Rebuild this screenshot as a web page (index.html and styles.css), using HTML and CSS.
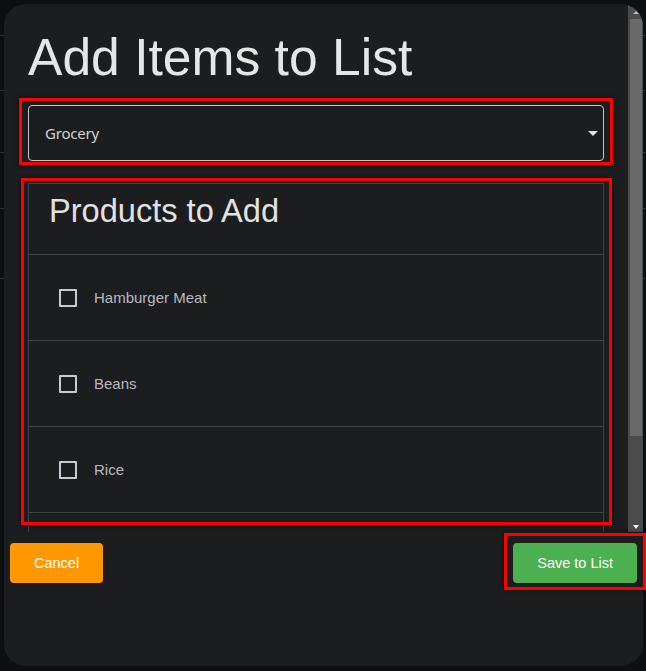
FILE: index.html
```html
<!DOCTYPE html>
<html lang="en">
<head>
<meta charset="utf-8">
<title>Add Items to List</title>
<link rel="stylesheet" href="styles.css">
</head>
<body>
<div class="page">
  <div class="page-row r1"></div>
  <div class="page-row r2"></div>
  <div class="page-row r3"></div>
  <div class="page-row r4"></div>
  <div class="page-row r5"></div>
</div>

<div class="modal">
  <div class="top">
    <div class="scroll">
      <h1 class="title">Add Items to List</h1>

      <div class="select-field">
        <span class="select-value">Grocery</span>
        <span class="select-arrow"></span>
        <span class="mark mark-select"></span>
      </div>

      <div class="list-wrap">
        <div class="list">
          <div class="list-header">Products to Add</div>
          <label class="list-row"><span class="checkbox"></span><span class="row-label">Hamburger Meat</span></label>
          <label class="list-row"><span class="checkbox"></span><span class="row-label">Beans</span></label>
          <label class="list-row"><span class="checkbox"></span><span class="row-label">Rice</span></label>
          <div class="list-row list-row-more"></div>
        </div>
        <span class="mark mark-list"></span>
      </div>
    </div>

    <div class="scrollbar">
      <div class="sb-btn"><span class="sb-arrow-up"></span></div>
      <div class="sb-track"><div class="sb-thumb"></div></div>
      <div class="sb-btn"><span class="sb-arrow-down"></span></div>
    </div>
  </div>

  <div class="footer">
    <button class="btn btn-cancel">Cancel</button>
    <div class="save-wrap">
      <button class="btn btn-save">Save to List</button>
      <span class="mark mark-save"></span>
    </div>
  </div>
</div>
</body>
</html>
```

FILE: styles.css
```css
html, body {
  margin: 0;
  padding: 0;
  background: #0e0f11;
  height: 100%;
  overflow: hidden;
  font-family: "Liberation Sans", Arial, sans-serif;
}

.page {
  display: flex;
  flex-direction: column;
}

.page-row {
  border-bottom: 1px solid #2a2c30;
}
.r1 { height: 35px; }
.r2 { height: 54px; }
.r3 { height: 61px; }
.r4 { height: 55px; }
.r5 { height: 69px; }

.modal {
  position: fixed;
  left: 4px;
  top: 4px;
  width: 639px;
  height: 662px;
  background: #1c1d1f;
  border-radius: 22px;
  display: flex;
  flex-direction: column;
}

.top {
  display: flex;
  height: 528px;
  flex: none;
  border-radius: 22px 22px 0 0;
  overflow: hidden;
}

.scroll {
  flex: 1;
  min-width: 0;
  box-sizing: border-box;
  overflow: hidden;
  padding: 23px 24px 0 24px;
}

.scrollbar {
  width: 15px;
  flex: none;
  background: #4b4b4b;
  display: flex;
  flex-direction: column;
}

.sb-btn {
  height: 14px;
  flex: none;
  display: flex;
  align-items: center;
  justify-content: center;
}

.sb-arrow-up {
  width: 0;
  height: 0;
  margin-top: 2px;
  border-left: 3px solid transparent;
  border-right: 3px solid transparent;
  border-bottom: 3px solid #bdbdbd;
}

.sb-arrow-down {
  width: 0;
  height: 0;
  margin-top: 3px;
  border-left: 3.5px solid transparent;
  border-right: 3.5px solid transparent;
  border-top: 4px solid #f0f0f0;
}

.sb-track {
  flex: 1;
  padding: 1px 1px 0 2px;
}

.sb-thumb {
  height: 417px;
  background: #6a6a6a;
}

.title {
  margin: 0;
  font-weight: 400;
  font-size: 51.6px;
  line-height: 60px;
  color: #e6e6e6;
}

.select-field {
  position: relative;
  margin-top: 18px;
  height: 56px;
  box-sizing: border-box;
  border: 1px solid #c4c6c9;
  border-radius: 4px;
  display: flex;
  align-items: center;
  padding: 0 5px 0 16px;
}

.select-value {
  flex: 1;
  font-family: "Noto Sans", sans-serif;
  font-size: 15px;
  letter-spacing: -0.2px;
  color: #d2d3d5;
}

.select-arrow {
  width: 0;
  height: 0;
  border-left: 5px solid transparent;
  border-right: 5px solid transparent;
  border-top: 5px solid #e0e0e0;
}

.mark {
  position: absolute;
  border: 3px solid #ff0000;
  box-shadow: 0 0 4px rgba(0, 0, 0, 0.7);
  pointer-events: none;
}

.mark-select {
  left: -10px;
  right: -10px;
  top: -8px;
  bottom: -5px;
}

.list-wrap {
  position: relative;
  margin-top: 22px;
}

.list {
  border: 1px solid #3e4146;
}

.list-header {
  height: 71px;
  box-sizing: border-box;
  padding: 8px 0 0 20px;
  font-size: 32.6px;
  line-height: 37px;
  color: #e2e2e2;
  border-bottom: 1px solid #3e4146;
}

.list-row {
  height: 86px;
  box-sizing: border-box;
  display: flex;
  align-items: center;
  gap: 17px;
  padding-left: 30px;
  border-bottom: 1px solid #3e4146;
}

.checkbox {
  width: 18px;
  height: 18px;
  box-sizing: border-box;
  border: 2px solid #c6cbd1;
  border-radius: 1px;
  flex: none;
}

.row-label {
  font-size: 15px;
  color: #b6bac0;
}

.mark-list {
  left: -7px;
  right: -8px;
  top: -5px;
  height: 347px;
  box-sizing: border-box;
}

.footer {
  display: flex;
  justify-content: space-between;
  align-items: flex-start;
  padding: 11px 6px 0 6px;
}

.btn {
  height: 40px;
  border: none;
  border-radius: 4px;
  padding: 0 24px;
  font-family: "Liberation Sans", Arial, sans-serif;
  font-size: 14.5px;
  color: #ffffff;
  cursor: pointer;
}

.btn-cancel {
  background: #ff9800;
}

.btn-save {
  background: #4caf50;
  display: block;
}

.save-wrap {
  position: relative;
}

.mark-save {
  left: -9px;
  right: -9px;
  top: -10px;
  bottom: -7px;
}
```
